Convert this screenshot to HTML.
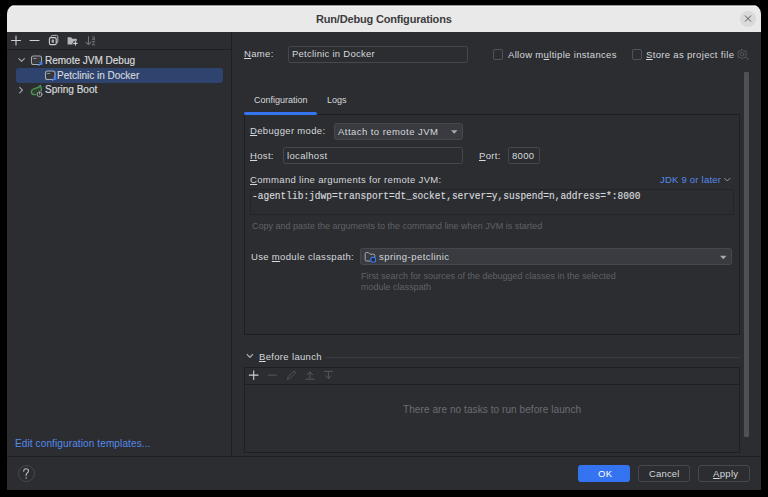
<!DOCTYPE html>
<html><head><meta charset="utf-8">
<style>
*{margin:0;padding:0;box-sizing:border-box}
html,body{width:768px;height:497px;background:#000;overflow:hidden}
body{font-family:"Liberation Sans",sans-serif;font-size:9.5px;letter-spacing:0.33px;color:#d6d8dc;position:relative}
.a{position:absolute}
#win{position:absolute;left:7px;top:5px;width:754px;height:485px;background:#2b2d30;border-radius:8.5px 8.5px 0 0;overflow:hidden}
#title{position:absolute;left:0;top:0;width:754px;height:27px;background:#e9e9e9;border-top:1px solid #9a9a9a;box-shadow:inset 0 1px 0 #f4f4f4}
.t{position:absolute;line-height:12px;white-space:pre}
.hl{position:absolute;height:1px;background:#1e1f22}
.vl{position:absolute;width:1px;background:#1e1f22}
.box{position:absolute;border:1px solid #1e1f22}
.field{position:absolute;border:1px solid #46484d;border-radius:2.5px}
.combo{position:absolute;border:1px solid #46484d;border-radius:2.5px;background:#393b40}
.chk{position:absolute;border:1.2px solid #50535a;border-radius:2px;width:10.4px;height:10.6px}
.gray{color:#6a6d73}
.link{color:#5689ec}
.hint{font-size:9px;letter-spacing:0;color:#5f6268}
u{text-decoration:underline;text-underline-offset:0.5px;text-decoration-thickness:1px}
svg{position:absolute;left:0;top:0;overflow:visible}
</style></head><body>
<div id="win">
  <div id="title"></div>
</div>

<!-- title text -->
<div class="t" style="left:316px;top:13px;font-weight:bold;font-size:11px;letter-spacing:-0.18px;color:#3c3c3c">Run/Debug Configurations</div>
<div class="a" style="left:740px;top:10.5px;width:16px;height:16px;border-radius:50%;background:#dadada"></div>

<!-- separators -->
<div class="hl" style="left:7px;top:49px;width:224px"></div>
<div class="vl" style="left:231px;top:32px;height:424px"></div>
<div class="hl" style="left:7px;top:456px;width:754px"></div>

<!-- tree selection -->
<div class="a" style="left:16px;top:68px;width:207px;height:15px;background:#2e436e;border-radius:3px"></div>

<!-- panels -->
<div class="box" style="left:244px;top:114px;width:496px;height:221px"></div>
<div class="a" style="left:244px;top:112px;width:73px;height:2.5px;background:#3574f0;border-radius:2px"></div>

<!-- fields -->
<div class="field" style="left:288px;top:46px;width:180px;height:17px"></div>
<div class="chk" style="left:493px;top:49px"></div>
<div class="chk" style="left:632px;top:49px"></div>
<div class="combo" style="left:334px;top:123px;width:129px;height:17px"></div>
<div class="field" style="left:283px;top:147px;width:180px;height:17px"></div>
<div class="field" style="left:508px;top:147px;width:32px;height:17px"></div>
<div class="field" style="left:250px;top:189px;width:484px;height:26px;border-color:#232427;border-radius:1px"></div>
<div class="combo" style="left:360px;top:248px;width:372px;height:17px"></div>

<!-- before launch box -->
<div class="hl" style="left:326px;top:357px;width:414px;background:#393b40"></div>
<div class="box" style="left:244px;top:367px;width:496px;height:86px"></div>
<div class="hl" style="left:245px;top:384px;width:495px"></div>

<!-- scrollbar -->
<div class="a" style="left:744px;top:72px;width:5px;height:365px;background:#4e5157;border-radius:1px"></div>

<!-- buttons -->
<div class="a" style="left:18px;top:465px;width:17px;height:17px;border-radius:50%;border:1px solid #46484d"></div>
<div class="a" style="left:578px;top:465px;width:52px;height:17px;background:#3574f0;border-radius:3px"></div>
<div class="a" style="left:638px;top:465px;width:52px;height:17px;border:1px solid #46484d;border-radius:3px"></div>
<div class="a" style="left:698px;top:465px;width:52px;height:17px;border:1px solid #46484d;border-radius:3px"></div>

<!-- ICONS -->
<svg width="768" height="497" fill="none" stroke-linecap="round" stroke-linejoin="round">
  <!-- close X -->
  <path d="M745.3 15.8 L750.8 21.3 M750.8 15.8 L745.3 21.3" stroke="#505050" stroke-width="0.95"/>
  <!-- left toolbar -->
  <path d="M16 36 V45 M11.5 40.5 H20.5" stroke="#ced0d6" stroke-width="1.1"/>
  <path d="M30 40.5 H39" stroke="#ced0d6" stroke-width="1.1"/>
  <path d="M51.2 37.2 V36.6 Q51.2 35.4 52.4 35.4 H56.6 Q57.8 35.4 57.8 36.6 V41.8 Q57.8 43 56.6 43 H56.4" stroke="#b8babe" stroke-width="1"/>
  <rect x="49.4" y="37.6" width="6.8" height="7" rx="1.4" fill="#2b2d30" stroke="#ced0d6" stroke-width="1.1"/>
  <rect x="51.6" y="39.4" width="2.4" height="3.4" rx="0.5" fill="#a8aaae" stroke="none"/>
  <path d="M67.6 37.3 H71 L72.4 38.7 H76.8 V41.2 A2.9 2.9 0 0 0 72.6 44.6 H67.6 Z" fill="#b4b6ba" stroke="none"/>
  <path d="M75.4 41.6 V45.1 M73.65 43.35 H77.15" stroke="#ced0d6" stroke-width="1.1"/>
  <path d="M88.5 36.6 V44.6 M86.2 42.3 L88.5 44.6 L90.8 42.3" stroke="#6f737a" stroke-width="1.1"/>
  <path d="M92.3 36.9 Q93.4 36.3 94.3 36.9 V40 M94.3 38.5 Q92 38.3 92 39.3 Q92.1 40.3 94.3 39.4" stroke="#6f737a" stroke-width="0.8"/>
  <path d="M92.1 41.5 H94.6 L92.1 44.8 H94.8" stroke="#6f737a" stroke-width="0.9"/>
  <!-- tree chevrons -->
  <path d="M18.8 58.6 L21.6 61.4 L24.4 58.6" stroke="#a8aaae" stroke-width="1.1"/>
  <path d="M19.6 87.3 L22.5 90.1 L19.6 92.9" stroke="#a8aaae" stroke-width="1.1"/>
  <!-- remote icon -->
  <rect x="31.5" y="56" width="10" height="8.5" rx="2" stroke="#a8aaae" stroke-width="1.1"/>
  <rect x="32.5" y="57" width="8" height="6.5" fill="#3a3c40" stroke="none"/>
  <path d="M33.5 58.5 H36" stroke="#a8aaae" stroke-width="0.8"/>
  <path d="M38.8 65.5 L42 62.3 M39.8 62.3 H42 V64.5" stroke="#3d7bf0" stroke-width="1.1"/>
  <!-- petclinic icon -->
  <rect x="45.5" y="71" width="9.5" height="8.5" rx="2" stroke="#a8aaae" stroke-width="1.1"/>
  <rect x="46.5" y="72" width="7.5" height="6.5" fill="#34363a" stroke="none"/>
  <path d="M47.3 73.5 H49.8" stroke="#a8aaae" stroke-width="0.8"/>
  <path d="M52.5 80.5 L55.7 77.3 M53.5 77.3 H55.7 V79.5" stroke="#3d7bf0" stroke-width="1.1"/>
  <!-- spring icon -->
  <path d="M40.3 85.3 C39.8 87.2 37.6 87.9 35.2 88.4 C32.5 89 31.2 90.6 31.4 92.3 C31.6 94 33.4 94.8 35.4 94.6 L37.5 94.2 C39.5 93.5 41.2 91.8 41.4 89.6 C41.5 88 41.1 86.5 40.3 85.3 Z" fill="#2f4331" stroke="#4b9150" stroke-width="1.4"/>
  <circle cx="39.6" cy="94.3" r="3.2" fill="#2b2d30" stroke="none"/>
  <circle cx="39.6" cy="94.3" r="2.4" stroke="#a0a2a6" stroke-width="1"/>
  <path d="M39.6 92.1 V94.3" stroke="#a0a2a6" stroke-width="1"/>
  <!-- gear -->
  <g transform="translate(742.2 54.3)" stroke="#5a5d62" stroke-width="0.9">
    <path d="M0 -4.8 L1.6 -3.2 L3.9 -3.2 L3.9 -0.9 L4.8 0 L3.9 0.9 L3.9 3.2 L1.6 3.2 L0 4.8 L-1.6 3.2 L-3.9 3.2 L-3.9 0.9 L-4.8 0 L-3.9 -0.9 L-3.9 -3.2 L-1.6 -3.2 Z" transform="rotate(0)"/>
    <circle r="1.8"/>
  </g>
  <path d="M746.3 59.5 L748.5 57.3 V59.5 Z" fill="#5a5d62" stroke="none"/>
  <!-- combo arrows -->
  <path d="M451 130.2 H457.5 L454.25 133.7 Z" fill="#a8aaad" stroke="none"/>
  <path d="M720 255.8 H726.5 L723.25 259.3 Z" fill="#a8aaad" stroke="none"/>
  <!-- JDK chevron -->
  <path d="M724.6 178.3 L727.3 181 L730 178.3" stroke="#9a9ca0" stroke-width="0.95"/>
  <!-- folder icon -->
  <path d="M370 261 H366.5 Q365.2 261 365.2 259.7 V253.8 Q365.2 252.5 366.5 252.5 H368.5 L370 254.2 H373.5 Q374.8 254.2 374.8 255.5 V256.5" stroke="#a8aaae" stroke-width="1"/>
  <rect x="370.9" y="257.4" width="4.6" height="4.6" rx="1.3" fill="#1e2a44" stroke="#3d7bf0" stroke-width="1.1"/>
  <!-- help ? -->
  <path d="M23.7 471.2 C23.7 469.5 24.8 468.7 26.1 468.7 C27.5 468.7 28.5 469.6 28.5 470.9 C28.5 472.2 27.6 472.7 26.9 473.3 C26.3 473.8 26.1 474.3 26.1 475.6" stroke="#b8babd" stroke-width="1.1"/>
  <circle cx="26.1" cy="477.9" r="0.75" fill="#b8babd" stroke="none"/>
  <!-- before launch chevron -->
  <path d="M247.2 354.5 L249.9 357.3 L252.6 354.5" stroke="#a8aaae" stroke-width="1.2"/>
  <!-- before launch toolbar -->
  <path d="M253.7 370.7 V379.5 M249.3 375.1 H258.1" stroke="#ced0d6" stroke-width="1.1"/>
  <path d="M268 375.1 H276.5" stroke="#55585d" stroke-width="1"/>
  <path d="M287.6 379 L288.2 376.6 L293.2 371.6 Q294.1 370.8 295 371.6 Q295.8 372.5 295 373.4 L290 378.4 Z" stroke="#55585d" stroke-width="0.9"/>
  <path d="M310 378 V372 M307.3 374.7 L310 372 L312.7 374.7 M306 379.2 H314" stroke="#55585d" stroke-width="1"/>
  <path d="M328.4 372.6 V378.6 M325.7 375.9 L328.4 378.6 L331.1 375.9 M324.4 371.4 H332.4" stroke="#55585d" stroke-width="1"/>
</svg>

<!-- TEXTS -->
<div class="t" style="left:45px;top:55px;font-size:10px;letter-spacing:0;-webkit-text-stroke:0.2px currentColor">Remote JVM Debug</div>
<div class="t" style="left:57px;top:70px;font-size:10px;letter-spacing:0;-webkit-text-stroke:0.15px currentColor">Petclinic in Docker</div>
<div class="t" style="left:45px;top:84px;font-size:10px;letter-spacing:0;-webkit-text-stroke:0.2px currentColor">Spring Boot</div>
<div class="t link" style="left:15px;top:438px;font-size:10px;letter-spacing:0.12px">Edit configuration templates...</div>

<div class="t" style="left:244px;top:48px"><u>N</u>ame:</div>
<div class="t" style="left:292px;top:48px;letter-spacing:0.25px">Petclinic in Docker</div>
<div class="t" style="left:508px;top:49px">Allow m<u>u</u>ltiple instances</div>
<div class="t" style="left:646px;top:49px"><u>S</u>tore as project file</div>

<div class="t" style="left:254px;top:94px;font-size:9px;letter-spacing:0">Configuration</div>
<div class="t" style="left:327px;top:94px;font-size:9px;letter-spacing:0">Logs</div>

<div class="t" style="left:250px;top:125px"><u>D</u>ebugger mode:</div>
<div class="t" style="left:338px;top:126px;letter-spacing:0.45px">Attach to remote JVM</div>
<div class="t" style="left:250px;top:150px"><u>H</u>ost:</div>
<div class="t" style="left:287px;top:150px">localhost</div>
<div class="t" style="left:479px;top:150px"><u>P</u>ort:</div>
<div class="t" style="left:512px;top:150px">8000</div>

<div class="t" style="left:250px;top:174px"><u>C</u>ommand line arguments for remote JVM:</div>
<div class="t link" style="left:660px;top:174px;letter-spacing:0.22px">JDK 9 or later</div>
<div class="t" style="left:252px;top:191px;font-family:'Liberation Mono',monospace;font-size:9.5px;letter-spacing:0.01px;-webkit-text-stroke:0.15px currentColor;transform:scaleY(1.2);transform-origin:0 8px">-agentlib:jdwp=transport=dt_socket,server=y,suspend=n,address=*:8000</div>
<div class="t hint" style="left:252px;top:220px">Copy and paste the arguments to the command line when JVM is started</div>

<div class="t" style="left:251px;top:251px">Use <u>m</u>odule classpath:</div>
<div class="t" style="left:379px;top:251px;letter-spacing:0.45px">spring-petclinic</div>
<div class="t hint" style="left:361px;top:271px;line-height:11px">First search for sources of the debugged classes in the selected
module classpath</div>

<div class="t" style="left:259px;top:351px"><u>B</u>efore launch</div>
<div class="t gray" style="left:403px;top:404px;font-size:10px;letter-spacing:0.08px">There are no tasks to run before launch</div>

<div class="t" style="left:598px;top:468px;color:#fff">OK</div>
<div class="t" style="left:649px;top:468px;letter-spacing:0.15px">Cancel</div>
<div class="t" style="left:713px;top:468px"><u>A</u>pply</div>

</body></html>
